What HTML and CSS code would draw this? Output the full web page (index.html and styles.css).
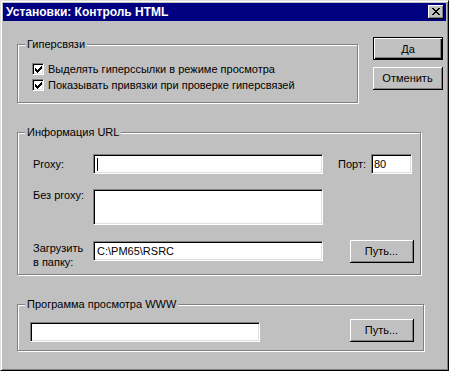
FILE: index.html
```html
<!DOCTYPE html>
<html lang="ru">
<head>
  <meta charset="UTF-8">
  <title>Установки: Контроль HTML</title>
  <link rel="stylesheet" href="styles.css">
</head>
<body>
  <div class="window">
    <div class="titleBar">
      <span class="titleText">Установки: Контроль HTML</span>
      <span class="closeButton">
        <svg width="8" height="7" viewBox="0 0 8 7" shape-rendering="crispEdges">
          <path d="M0 0h2v1h-2zM6 0h2v1h-2zM1 1h2v1h-2zM5 1h2v1h-2zM2 2h4v1h-4zM3 3h2v1h-2zM2 4h4v1h-4zM1 5h2v1h-2zM5 5h2v1h-2zM0 6h2v1h-2zM6 6h2v1h-2z" fill="#000"/>
        </svg>
      </span>
    </div>
    <div class="dialogBody">
      <div class="topRow">
        <div class="group linksGroup">
          <span class="groupTitle">Гиперсвязи</span>
          <div class="checkList">
            <div class="checkRow">
              <span class="checkBox">
                <svg width="7" height="7" viewBox="0 0 7 7" shape-rendering="crispEdges">
                  <path d="M6 0h1v3h-1zM5 1h1v3h-1zM4 2h1v3h-1zM3 3h1v3h-1zM2 4h1v3h-1zM1 3h1v3h-1zM0 2h1v3h-1z" fill="#000"/>
                </svg>
              </span>
              <span>Выделять гиперссылки в режиме просмотра</span>
            </div>
            <div class="checkRow">
              <span class="checkBox">
                <svg width="7" height="7" viewBox="0 0 7 7" shape-rendering="crispEdges">
                  <path d="M6 0h1v3h-1zM5 1h1v3h-1zM4 2h1v3h-1zM3 3h1v3h-1zM2 4h1v3h-1zM1 3h1v3h-1zM0 2h1v3h-1z" fill="#000"/>
                </svg>
              </span>
              <span>Показывать привязки при проверке гиперсвязей</span>
            </div>
          </div>
        </div>
        <div class="mainButtons">
          <button class="button isDefault">Да</button>
          <button class="button">Отменить</button>
        </div>
      </div>

      <div class="group urlGroup">
        <span class="groupTitle">Информация URL</span>
        <div class="urlGrid">
          <span class="fieldLabel centered">Proxy:</span>
          <span class="field"><span class="caret"></span></span>
          <div class="portBox">
            <span class="fieldLabel">Порт:</span>
            <span class="field portField">80</span>
          </div>
          <span class="fieldLabel">Без proxy:</span>
          <span class="field tallField"></span>
          <span></span>
          <span class="fieldLabel twoLines">Загрузить<br>в папку:</span>
          <span class="field loadField">C:\PM65\RSRC</span>
          <button class="button pathButton">Путь...</button>
        </div>
      </div>

      <div class="group browserGroup">
        <span class="groupTitle">Программа просмотра WWW</span>
        <div class="browserRow">
          <span class="field browserField"></span>
          <button class="button pathButton">Путь...</button>
        </div>
      </div>
    </div>
  </div>
</body>
</html>
```

FILE: styles.css
```css
* {
  margin: 0;
  padding: 0;
  box-sizing: border-box;
}
body {
  font-family: "Liberation Sans", Arial, sans-serif;
  font-size: 11px;
  color: #000;
  background-color: #c0c0c0;
}
.window {
  width: 449px;
  height: 371px;
  padding: 2px;
  background-color: #c0c0c0;
  border-top: 1px solid #dfdfdf;
  border-left: 1px solid #dfdfdf;
  border-right: 1px solid #000;
  border-bottom: 1px solid #000;
  box-shadow: inset 1px 1px 0 #fff, inset -1px -1px 0 #808080;
}
.titleBar {
  height: 18px;
  display: flex;
  align-items: center;
  justify-content: space-between;
  padding: 0 2px 0 3px;
  background-color: #000080;
  color: #fff;
}
.titleText {
  font-weight: bold;
  font-size: 12px;
}
.closeButton {
  width: 16px;
  height: 14px;
  display: flex;
  align-items: center;
  justify-content: center;
  background-color: #c0c0c0;
  border-right: 1px solid #000;
  border-bottom: 1px solid #000;
  box-shadow: inset 1px 1px 0 #fff, inset -1px -1px 0 #808080;
}
.dialogBody {
  padding: 16px 0 0 14px;
}
.topRow {
  display: flex;
  align-items: flex-start;
  gap: 15px;
}
.group {
  border: 1px solid #808080;
  box-shadow: inset 1px 1px 0 #fff, 1px 1px 0 #fff;
}
.groupTitle {
  display: table;
  margin: -7px 0 0 7px;
  padding: 0 2px;
  line-height: 13px;
  background-color: #c0c0c0;
}
.linksGroup {
  width: 341px;
  height: 59px;
  margin-top: 7px;
}
.checkList {
  margin: 10px 0 0 14px;
}
.checkRow {
  height: 16px;
  display: flex;
  align-items: center;
  gap: 4px;
}
.checkBox {
  width: 12px;
  height: 12px;
  display: flex;
  align-items: center;
  justify-content: center;
  background-color: #fff;
  border-top: 1px solid #808080;
  border-left: 1px solid #808080;
  border-right: 1px solid #fff;
  border-bottom: 1px solid #fff;
  box-shadow: inset 1px 1px 0 #000, inset -1px -1px 0 #dfdfdf;
}
.mainButtons {
  display: flex;
  flex-direction: column;
  gap: 7px;
}
.button {
  width: 70px;
  height: 23px;
  font-family: inherit;
  font-size: 11px;
  color: #000;
  background-color: #c0c0c0;
  border: 0;
  border-right: 1px solid #000;
  border-bottom: 1px solid #000;
  box-shadow: inset 1px 1px 0 #fff, inset -1px -1px 0 #808080;
}
.button.isDefault {
  border: 1px solid #000;
  box-shadow: inset 1px 1px 0 #fff, inset -1px -1px 0 #000, inset -2px -2px 0 #808080;
}
.field {
  display: flex;
  align-items: center;
  height: 20px;
  padding-left: 3px;
  background-color: #fff;
  border-top: 1px solid #808080;
  border-left: 1px solid #808080;
  border-right: 1px solid #fff;
  border-bottom: 1px solid #fff;
  box-shadow: inset 1px 1px 0 #000, inset -1px -1px 0 #dfdfdf;
}
.caret {
  width: 1px;
  height: 13px;
  background-color: #000;
}
.urlGroup {
  width: 404px;
  margin-top: 29px;
  padding-bottom: 11px;
}
.urlGrid {
  display: grid;
  grid-template-columns: 60px 230px auto;
  grid-template-rows: 20px 36px 23px;
  row-gap: 15px;
  margin: 15px 0 0 15px;
  align-items: start;
}
.fieldLabel {
  line-height: 13px;
}
.fieldLabel.centered {
  align-self: center;
}
.fieldLabel.twoLines {
  margin-top: 1px;
  line-height: 14px;
}
.tallField {
  height: 36px;
}
.loadField {
  margin-top: 1px;
}
.portBox {
  display: flex;
  align-items: center;
  gap: 5px;
  margin-left: 15px;
}
.portField {
  width: 41px;
  padding-left: 2px;
}
.pathButton {
  width: 64px;
  margin-left: 27px;
}
.browserGroup {
  width: 407px;
  height: 47px;
  margin-top: 29px;
}
.browserRow {
  display: flex;
  align-items: flex-end;
  margin: 8px 0 0 12px;
}
.browserField {
  width: 230px;
}
.browserRow .pathButton {
  margin-left: 90px;
}
```
